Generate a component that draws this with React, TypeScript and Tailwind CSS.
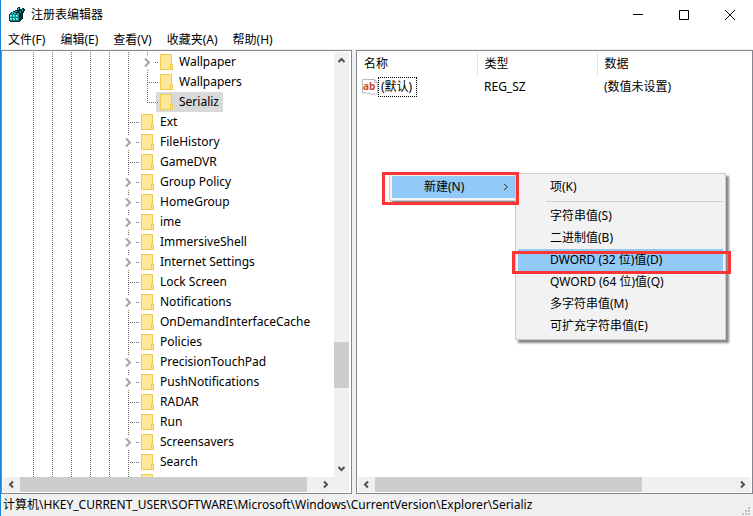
import type { ReactNode } from 'react'

type Kind = 'expandable' | 'leaf' | 'last'

type TreeRow = { name: string; kind: Kind; depth: number; selected?: boolean }

const ROWS: TreeRow[] = [
  { name: 'Wallpaper', kind: 'expandable', depth: 6 },
  { name: 'Wallpapers', kind: 'leaf', depth: 6 },
  { name: 'Serializ', kind: 'last', depth: 6, selected: true },
  { name: 'Ext', kind: 'leaf', depth: 5 },
  { name: 'FileHistory', kind: 'expandable', depth: 5 },
  { name: 'GameDVR', kind: 'leaf', depth: 5 },
  { name: 'Group Policy', kind: 'expandable', depth: 5 },
  { name: 'HomeGroup', kind: 'expandable', depth: 5 },
  { name: 'ime', kind: 'expandable', depth: 5 },
  { name: 'ImmersiveShell', kind: 'expandable', depth: 5 },
  { name: 'Internet Settings', kind: 'expandable', depth: 5 },
  { name: 'Lock Screen', kind: 'leaf', depth: 5 },
  { name: 'Notifications', kind: 'expandable', depth: 5 },
  { name: 'OnDemandInterfaceCache', kind: 'leaf', depth: 5 },
  { name: 'Policies', kind: 'leaf', depth: 5 },
  { name: 'PrecisionTouchPad', kind: 'expandable', depth: 5 },
  { name: 'PushNotifications', kind: 'expandable', depth: 5 },
  { name: 'RADAR', kind: 'leaf', depth: 5 },
  { name: 'Run', kind: 'leaf', depth: 5 },
  { name: 'Screensavers', kind: 'expandable', depth: 5 },
  { name: 'Search', kind: 'leaf', depth: 5 },
  { name: '', kind: 'leaf', depth: 5 },
]

const MENUS = ['文件(F)', '编辑(E)', '查看(V)', '收藏夹(A)', '帮助(H)']

const NEW_VALUES = ['字符串值(S)', '二进制值(B)', 'DWORD (32 位)值(D)', 'QWORD (64 位)值(Q)', '多字符串值(M)', '可扩充字符串值(E)']

function RegistryIcon() {
  return (
    <svg viewBox="0 0 16 16" className="h-4 w-4" shapeRendering="crispEdges">
      <path d="M1 6h1V5h2V4h2V3h2V1h1V0h2v2h2V1h2v1h1v2h-1v2h-1v6h-1v1h-1v1h-1v1H1v-1H0V7h1z" fill="#052a2c" />
      <path d="M1 7h9v7H1z" fill="#0d8488" />
      <path d="M1 8h2v2H1zM4 8h2v2H4zM7 8h2v2H7zM1 11h2v2H1zM4 11h2v2H4zM7 11h2v2H7z" fill="#35d6d6" />
      <path d="M3 5h3v1H3zM6 4h2v1H6zM2 6h2v1H2zM5 6h2v1H5zM8 6h2v1H8zM9 1h1v2H9zM13 2h1v2h-1zM11 4h1v2h-1z" fill="#21b5b8" />
      <path d="M1 8h1v1H1zM4 8h1v1H4zM7 8h1v1H7zM1 11h1v1H1zM4 11h1v1H4zM7 11h1v1H7z" fill="#c8ffff" />
    </svg>
  )
}

function StringValueIcon() {
  return (
    <svg viewBox="0 0 16 16" className="h-4 w-4 shrink-0">
      <path d="M.5.5h12l3 3v11l-2 1-2-1-2 1-2-1.5-2 .5-2-1-3 .5z" fill="#fff" stroke="#b9b9b9" />
      <path d="M12.5.5v3h3" fill="none" stroke="#b9b9b9" />
      <text x="1" y="11" fontSize="10" fontWeight="700" fill="#d24726" fontFamily="Open Sans, sans-serif">ab</text>
    </svg>
  )
}

function FolderIcon() {
  return (
    <svg viewBox="0 0 13 16" className="h-4 w-[13px] shrink-0" shapeRendering="crispEdges">
      <path d="M.5.5h11v15H.5z" fill="#ffe79a" stroke="#efca4e" />
      <path d="M10.5 10.5h2v5h-2z" fill="#ffe79a" stroke="#efca4e" />
    </svg>
  )
}

function Branch({ kind }: { kind: Kind }) {
  return (
    <svg viewBox="0 0 13 20" className="relative z-10 h-5 w-[13px] shrink-0 overflow-visible" fill="none">
      {kind === 'expandable' ? (
        <>
          <path d="M4.5 0v3M4.5 18v2M12 10.5h3" stroke="#6e6e6e" strokeDasharray="1 1" />
          <path d="M2 6.5l4 4-4 4" stroke="#a6a6a6" strokeWidth="2" />
        </>
      ) : (
        <path d={kind === 'last' ? 'M4.5 0v11M6 10.5h9' : 'M4.5 0v20M6 10.5h9'} stroke="#6e6e6e" strokeDasharray="1 1" />
      )}
    </svg>
  )
}

const ARROWS = {
  left: 'M9 4.5l-3 3 3 3',
  right: 'M6 4.5l3 3-3 3',
  up: 'M4.5 9l3-3 3 3',
  down: 'M4.5 6l3 3 3-3',
}

function ScrollButton({ dir, label }: { dir: keyof typeof ARROWS; label: string }) {
  return (
    <button type="button" aria-label={label} className="flex min-h-[15px] min-w-[15px] shrink-0 basis-[17px] items-center justify-center">
      <svg viewBox="0 0 15 15" className="h-[15px] w-[15px]" fill="none" stroke="#505050" strokeWidth="2">
        <path d={ARROWS[dir]} />
      </svg>
    </button>
  )
}

function MenuItem({ children, active, arrow }: { children: ReactNode; active?: boolean; arrow?: boolean }) {
  return (
    <button type="button" role="menuitem" className={`flex h-[22px] w-full items-center pr-1.5 pl-8 text-left ${active ? 'bg-[#91c9f7]' : ''}`}>
      <span className="grow">{children}</span>
      {arrow && (
        <svg viewBox="0 0 6 10" className="h-2.5 w-1.5" fill="none" stroke="#333">
          <path d="M1 2l3.5 3L1 8" />
        </svg>
      )}
    </button>
  )
}

function KeyTree() {
  return (
    <section className="flex w-[351px] shrink-0 flex-col border border-[#828790] bg-white pt-px pr-0.5 pb-px pl-px">
      <div className="flex min-h-0 grow">
        <ul role="tree" aria-label="注册表项" className="min-w-0 grow overflow-hidden pl-[26px]">
          {ROWS.map((row) => (
            <li key={row.name} role="treeitem" aria-selected={!!row.selected} className="flex h-5">
              {Array.from({ length: row.depth }, (_, i) => (
                <span key={i} className="mr-3.5 ml-1 w-px shrink-0 bg-[repeating-linear-gradient(#6e6e6e_0_1px,#fff_1px_2px)]" />
              ))}
              <Branch kind={row.kind} />
              <span className={`flex items-center gap-1.5 px-1 whitespace-nowrap ${row.selected ? 'bg-[#d9d9d9]' : ''}`}>
                <FolderIcon />
                {row.name}
              </span>
            </li>
          ))}
        </ul>
        <div className="flex w-[15px] shrink-0 flex-col bg-[#f0f0f0]">
          <ScrollButton dir="up" label="向上滚动" />
          <div className="grow-[272]" />
          <div className="grow-[46] bg-[#cdcdcd]" />
          <div className="grow-[72]" />
          <ScrollButton dir="down" label="向下滚动" />
        </div>
      </div>
      <div className="flex h-[15px] shrink-0 bg-[#f0f0f0] pr-[15px]">
        <ScrollButton dir="left" label="向左滚动" />
        <div className="grow bg-[#cdcdcd]" />
        <div className="w-2.5" />
        <ScrollButton dir="right" label="向右滚动" />
      </div>
    </section>
  )
}

function ValueList() {
  return (
    <section className="relative flex min-w-0 grow flex-col border border-[#828790] bg-white p-px">
      <div className="grow overflow-hidden">
        <table className="w-full table-fixed border-collapse text-left">
          <thead>
            <tr className="h-6">
              <th className="w-[119px] border-r border-[#e5e5e5] pl-1.5 font-normal">名称</th>
              <th className="w-[120px] border-r border-[#e5e5e5] pl-[7px] font-normal">类型</th>
              <th className="pl-[7px] font-normal">数据</th>
            </tr>
          </thead>
          <tbody>
            <tr className="h-[22px]">
              <td className="pl-1">
                <span className="flex items-center">
                  <StringValueIcon />
                  <span className="border border-dotted border-black pr-1 pl-0.5 leading-[18px]">(默认)</span>
                </span>
              </td>
              <td className="pl-[7px]">REG_SZ</td>
              <td className="pl-[7px]">(数值未设置)</td>
            </tr>
          </tbody>
        </table>
      </div>
      <div className="flex h-[15px] shrink-0 bg-[#f0f0f0]">
        <ScrollButton dir="left" label="向左滚动" />
        <div className="grow-[267] bg-[#cdcdcd]" />
        <div className="grow-[92]" />
        <ScrollButton dir="right" label="向右滚动" />
      </div>

      <div role="menu" className="absolute top-[122px] left-8 w-[129px] border border-[#ccc] bg-[#f2f2f2] p-0.5 shadow-[3px_3px_2px_#0007]">
        <MenuItem active arrow>新建(N)</MenuItem>
      </div>
      <div role="menu" className="absolute top-[122px] left-[158px] w-[211px] border border-[#ccc] bg-[#f2f2f2] p-0.5 shadow-[3px_3px_2px_#0007]">
        <MenuItem>项(K)</MenuItem>
        <div role="separator" className="my-[3px] ml-7 h-px bg-[#d0d0d0]" />
        {NEW_VALUES.map((item) => (
          <MenuItem key={item} active={item.startsWith('DWORD')}>{item}</MenuItem>
        ))}
      </div>
      <div className="pointer-events-none absolute top-[121px] left-[25px] h-[33px] w-[137px] border-3 border-[#fb3535]" />
      <div className="pointer-events-none absolute top-[200px] left-[155px] h-[23px] w-[219px] border-3 border-[#fb3535]" />
    </section>
  )
}

export default function App() {
  return (
    <div className="flex h-screen flex-col overflow-hidden border-l border-[#1883d7] bg-[#f0f0f0] font-['Noto_Sans','Noto_Sans_CJK_SC',sans-serif] text-[12px] leading-4 text-black">
      <header className="flex h-[30px] shrink-0 items-center bg-white pl-2">
        <RegistryIcon />
        <h1 className="ml-1.5 grow">注册表编辑器</h1>
        <button type="button" aria-label="最小化" className="flex w-[46px] justify-center">
          <svg viewBox="0 0 10 10" className="h-2.5 w-2.5" stroke="#000"><path d="M0 4.5h10" /></svg>
        </button>
        <button type="button" aria-label="最大化" className="flex w-[46px] justify-center">
          <svg viewBox="0 0 10 10" className="h-2.5 w-2.5" fill="none" stroke="#000"><path d="M.5.5h9v9h-9z" /></svg>
        </button>
        <button type="button" aria-label="关闭" className="flex w-[46px] justify-center">
          <svg viewBox="0 0 10 10" className="h-2.5 w-2.5" stroke="#000"><path d="M0 0l10 10M10 0L0 10" /></svg>
        </button>
      </header>
      <nav className="flex h-[19px] shrink-0 items-center gap-[15px] bg-white pl-[7px]">
        {MENUS.map((menu) => <button key={menu} type="button">{menu}</button>)}
      </nav>
      <main className="flex min-h-0 grow gap-1 pt-px">
        <KeyTree />
        <ValueList />
      </main>
      <footer className="flex h-[22px] shrink-0 items-center pl-0.5">
        <span className="grow">计算机\HKEY_CURRENT_USER\SOFTWARE\Microsoft\Windows\CurrentVersion\Explorer\Serializ</span>
        <svg viewBox="0 0 10 10" className="mr-0.5 h-2.5 w-2.5 self-end" fill="#bfbfbf">
          <path d="M7 1h2v2H7zM4 4h2v2H4zM7 4h2v2H7zM1 7h2v2H1zM4 7h2v2H4zM7 7h2v2H7z" />
        </svg>
      </footer>
    </div>
  )
}
